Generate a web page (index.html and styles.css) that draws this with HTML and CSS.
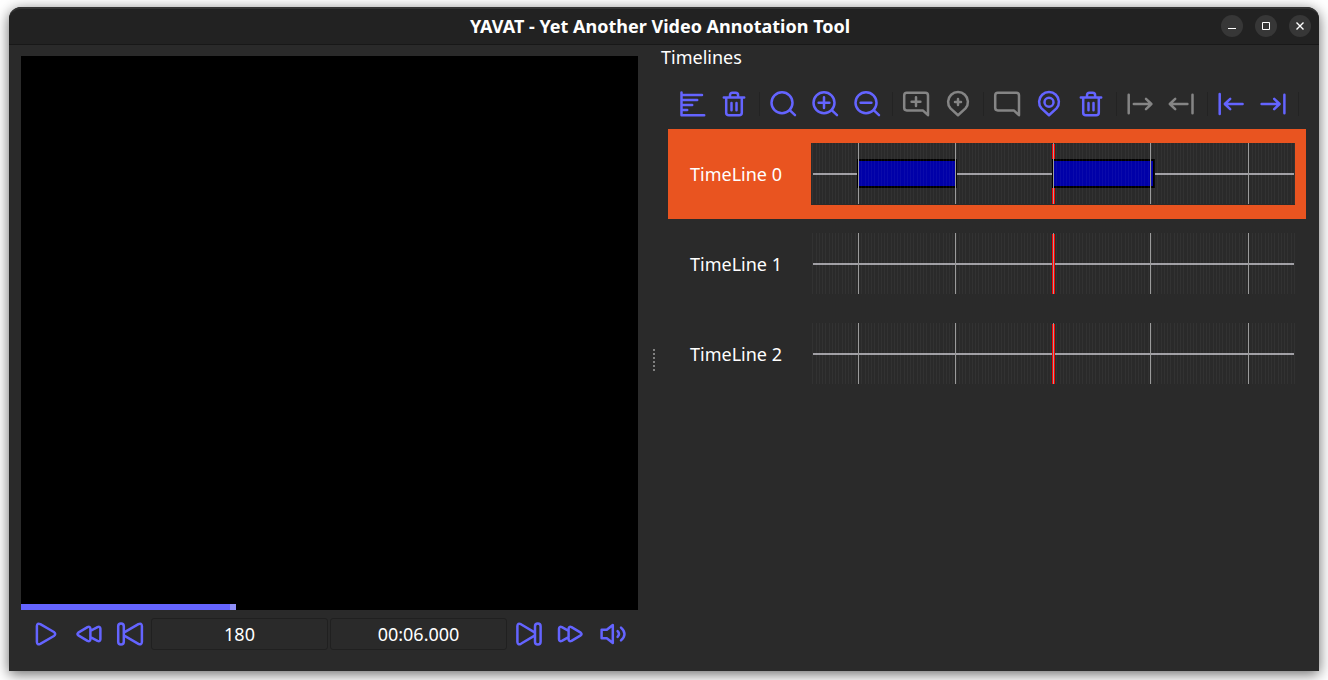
FILE: index.html
```html
<!DOCTYPE html>
<html lang="en">
<head>
<meta charset="utf-8">
<title>YAVAT - Yet Another Video Annotation Tool</title>
<link rel="stylesheet" href="styles.css">
</head>
<body>
<svg class="defs" aria-hidden="true">
  <symbol id="i-trash" viewBox="0 0 28 28"><path d="M3.8 7.5H24.2M10 7V5.2Q10 2.8 12.4 2.8H15.7Q18.1 2.8 18.1 5.2V7M6.2 8V22.7Q6.2 25.2 8.9 25.2H19.1Q21.8 25.2 21.8 22.7V8M11.5 12.9V20.3M16.5 12.9V20.3"/></symbol>
  <symbol id="i-comment" viewBox="0 0 28 28"><path d="M4.8 2.7H23.3Q26 2.7 26 5.4V25.2L20.8 20.4H4.8Q2.2 20.4 2.2 17.8V5.4Q2.2 2.7 4.8 2.7Z"/></symbol>
  <symbol id="i-pin" viewBox="0 0 28 28"><path d="M14 25.2L6.5 18.4A9.9 9.9 0 1 1 21.5 18.4Z"/></symbol>
  <symbol id="i-lens" viewBox="0 0 28 28"><circle cx="13" cy="12.7" r="10.5"/><path d="M20.7 20.2L26 25.2"/></symbol>
  <symbol id="grid" viewBox="0 0 484 62" preserveAspectRatio="none"><path class="minor" d="M1.46 30.5H484"/><path class="major" d="M47.5 0V61M144.5 0V61M242.5 0V61M339.5 0V61M437.5 0V61"/></symbol>
</svg>
<div class="window">
  <header class="titlebar">
    <h1>YAVAT - Yet Another Video Annotation Tool</h1>
    <div class="window-buttons">
      <button aria-label="Minimize"><svg viewBox="0 0 22 22"><path d="M7 13.5H15"/></svg></button>
      <button aria-label="Maximize"><svg viewBox="0 0 22 22"><path d="M7.5 7.5H14.5V14.5H7.5Z"/></svg></button>
      <button aria-label="Close"><svg viewBox="0 0 22 22"><path class="cross" d="M7.5 7.5L14.5 14.5M14.5 7.5L7.5 14.5"/></svg></button>
    </div>
  </header>
  <main class="content">
    <section class="player" aria-label="Player">
      <div class="video"></div>
      <input class="seek" type="range" min="0" max="1000" value="342" aria-label="Position">
      <div class="controls">
        <button class="tool" aria-label="Play"><svg viewBox="0 0 28 28"><path d="M5.9 6V22Q6.1 25.2 9.3 23.8L22.9 16Q25.5 14 22.9 12L9.3 4.2Q6.1 2.8 5.9 6Z"/></svg></button>
        <button class="tool" aria-label="Rewind"><svg viewBox="0 0 28 28"><path d="M5.3 12.6Q3.6 14 5.3 15.4L14.5 20.8Q17.2 22 17.4 19.2V8.8Q17.2 6 14.5 7.2ZM17.4 10.8L24.5 7.2Q27.2 6 27.4 8.8V19.2Q27.2 22 24.5 20.8L17.4 17.2"/></svg></button>
        <button class="tool" aria-label="Previous frame"><svg viewBox="0 0 28 28"><rect x="3.2" y="3.4" width="5.6" height="21.2" rx="2.8"/><path d="M9.2 12.4L23.4 4.2Q26.6 2.8 26.9 6V22Q26.6 25.2 23.4 23.8L9.2 15.6"/></svg></button>
        <input class="field" type="text" value="180" aria-label="Frame">
        <input class="field" type="text" value="00:06.000" aria-label="Time">
        <button class="tool" aria-label="Next frame"><svg viewBox="0 0 28 28"><rect x="20" y="3.4" width="5.6" height="21.2" rx="2.8"/><path d="M19.6 12.4L5.9 4.2Q2.7 2.8 2.4 6V22Q2.7 25.2 5.9 23.8L19.6 15.6"/></svg></button>
        <button class="tool" aria-label="Fast forward"><svg viewBox="0 0 28 28"><path d="M23.7 12.6Q25.4 14 23.7 15.4L14.5 20.8Q11.8 22 11.6 19.2V8.8Q11.8 6 14.5 7.2ZM11.6 10.8L4.9 7.2Q2.2 6 2 8.8V19.2Q2.2 22 4.9 20.8L11.6 17.2"/></svg></button>
        <button class="tool" aria-label="Volume"><svg viewBox="0 0 28 28"><path d="M2.6 9.8H7.8L13.8 5V23L7.8 18.2H2.6ZM18.6 11.2Q21.4 14 18.6 16.8M22 7.6Q29 14 22 20.4"/></svg></button>
      </div>
    </section>
    <div class="splitter"><i></i><i></i><i></i><i></i><i></i><i></i></div>
    <section class="timelines">
      <h2>Timelines</h2>
      <div class="toolbar" role="toolbar" aria-label="Timeline tools">
        <button class="tool" aria-label="Add timeline"><svg viewBox="0 0 28 28"><path d="M3.5 2.6V25.2H26.2M3.5 5H24M3.5 10H19.2M3.5 15H14.2M3.5 20H9.2"/></svg></button>
        <button class="tool" aria-label="Delete timeline"><svg><use href="#i-trash"/></svg></button>
        <span class="sep"></span>
        <button class="tool" aria-label="Reset zoom"><svg><use href="#i-lens"/></svg></button>
        <button class="tool" aria-label="Zoom in"><svg viewBox="0 0 28 28"><use href="#i-lens"/><path d="M7.6 12.7H18.4M13 7.3V18.1"/></svg></button>
        <button class="tool" aria-label="Zoom out"><svg viewBox="0 0 28 28"><use href="#i-lens"/><path d="M7.6 12.7H18.4"/></svg></button>
        <span class="sep"></span>
        <button class="tool" disabled aria-label="Add annotation"><svg viewBox="0 0 28 28"><use href="#i-comment"/><path d="M9.6 11.7H18.4M14 7.3V16.1"/></svg></button>
        <button class="tool" disabled aria-label="Add marker"><svg viewBox="0 0 28 28"><use href="#i-pin"/><path d="M11 12H17M14 9V15"/></svg></button>
        <span class="sep"></span>
        <button class="tool" disabled aria-label="Edit annotation"><svg><use href="#i-comment"/></svg></button>
        <button class="tool" aria-label="Edit marker"><svg viewBox="0 0 28 28"><use href="#i-pin"/><circle cx="14" cy="12.2" r="4.5"/></svg></button>
        <button class="tool" aria-label="Delete annotation"><svg><use href="#i-trash"/></svg></button>
        <span class="sep"></span>
        <button class="tool" disabled aria-label="Set start"><svg viewBox="0 0 28 28"><path d="M2.7 4.8V23.2M7.8 14H25.4M20 8.8L25.4 14L20 19.2"/></svg></button>
        <button class="tool" disabled aria-label="Set end"><svg viewBox="0 0 28 28"><path d="M24.5 4.8V23.2M19.4 14H1.8M7.2 8.8L1.8 14L7.2 19.2"/></svg></button>
        <span class="sep"></span>
        <button class="tool" aria-label="Go to start"><svg viewBox="0 0 28 28"><path d="M2.7 4V24M25.6 14H8M13.2 8.8L7.8 14L13.2 19.2"/></svg></button>
        <button class="tool" aria-label="Go to end"><svg viewBox="0 0 28 28"><path d="M25.4 4.8V23.2M2.6 14H20.4M15.2 8.8L20.6 14L15.2 19.2"/></svg></button>
        <span class="sep"></span>
      </div>
      <ul class="rows">
        <li class="row selected"><span class="name">TimeLine 0</span>
          <svg class="track" viewBox="0 0 484 62" preserveAspectRatio="none"><path class="axis" d="M2 31H483"/><path class="cursor" d="M242.5 1V61"/><path class="edge" d="M46 16H146V45H46ZM241 16H344V45H241Z"/><path class="segment" d="M48 18H144V43H48ZM243 18H342V43H243Z"/><use href="#grid" width="484" height="62"/></svg></li>
        <li class="row"><span class="name">TimeLine 1</span>
          <svg class="track" viewBox="0 0 484 62" preserveAspectRatio="none"><path class="axis" d="M2 31H483"/><path class="cursor" d="M242.5 1V61"/><use href="#grid" width="484" height="62"/></svg></li>
        <li class="row"><span class="name">TimeLine 2</span>
          <svg class="track" viewBox="0 0 484 62" preserveAspectRatio="none"><path class="axis" d="M2 31H483"/><path class="cursor" d="M242.5 1V61"/><use href="#grid" width="484" height="62"/></svg></li>
      </ul>
    </section>
  </main>
</div>
</body>
</html>
```
FILE: styles.css
```css
* { box-sizing: border-box; }
body {
  margin: 0;
  min-height: 100vh;
  padding: 7px 9px 9px;
  display: flex;
  background: #fff;
  color: #fff;
  font: 18px/24px "Noto Sans", "Open Sans", sans-serif;
}
button, input { font: inherit; color: inherit; margin: 0; padding: 0; border: 0; background: none; }
h1, h2 { margin: 0; font-size: 18px; }
.defs { position: absolute; width: 0; height: 0; }
.window {
  flex: 1;
  display: flex;
  flex-direction: column;
  background: #2a2a2a;
  border-radius: 12px 12px 0 0;
  box-shadow: 0 3px 14px rgba(0, 0, 0, .6);
}
.titlebar {
  display: grid;
  grid-template-columns: 1fr auto 1fr;
  align-items: center;
  height: 38px;
  padding: 0 8px 2px 0;
  background: #222;
  border-top: 2px solid #343434;
  border-bottom: 1px solid #181818;
  border-radius: 12px 12px 0 0;
}
.titlebar h1 { grid-column: 2; font-weight: 700; }
.window-buttons { display: flex; gap: 12px; justify-content: flex-end; }
.window-buttons button { width: 22px; height: 22px; border-radius: 50%; background: #373737; }
.window-buttons svg { display: block; width: 22px; height: 22px; fill: none; stroke: #fff; }
.window-buttons .cross { stroke-width: 1.4; }
.content { flex: 1; display: grid; grid-template-columns: 617fr 23px 658fr; padding-left: 12px; }
.player { display: flex; flex-direction: column; min-width: 0; padding: 11px 0 14px; }
.video { flex: 1; background: #000; }
.seek {
  appearance: none;
  display: block;
  width: 100%;
  height: 6px;
  background: linear-gradient(to right, #6464ff 34.4%, #000 34.4%);
}
.seek::-webkit-slider-thumb { appearance: none; width: 6px; height: 6px; background: #8f8ff8; }
.controls { display: flex; align-items: center; height: 46px; margin-top: 1px; padding: 0 4px 0 3px; }
.tool { flex: none; display: grid; place-items: center; width: 42px; height: 42px; }
.tool svg {
  width: 28px;
  height: 28px;
  overflow: visible;
  fill: none;
  stroke: #6464ff;
  stroke-width: 2.5;
  stroke-linecap: round;
  stroke-linejoin: round;
}
.tool:disabled svg { stroke: #858585; }
.field {
  flex: 1;
  min-width: 0;
  height: 32px;
  margin: 0 1px;
  border: 1px solid #202020;
  border-radius: 3px;
  text-align: center;
}
.splitter { display: flex; flex-direction: column; align-items: center; justify-content: center; gap: 2px; padding: 3px 0 0 9px; }
.splitter i { width: 2px; height: 2px; background: #808080; }
.timelines h2 { font-weight: 400; }
.toolbar { display: flex; align-items: center; height: 50px; margin-top: 10px; padding-left: 10px; }
.sep { width: 7px; height: 24px; padding-left: 4px; background: linear-gradient(#232323, #232323) content-box; border-right: 2px solid transparent; }
.rows { list-style: none; margin: 0 13px 0 7px; padding: 0; }
.row { display: flex; align-items: center; height: 90px; padding: 0 11px 0 22px; }
.row.selected { background: #e95420; }
.name { width: 121px; padding-bottom: 1px; }
.track { flex: 1; min-width: 0; height: 62px; background: #2a2a2a; fill: none; shape-rendering: crispEdges; }
.axis { stroke: #a09fa4; stroke-width: 2; }
.cursor { stroke: #f00; stroke-width: 3; }
.edge { fill: #000; }
.segment { fill: #0000a8; }
.minor { stroke: #fff; stroke-opacity: .04; stroke-width: 61; stroke-dasharray: 1 2.253; }
.major { stroke: #9b9b9b; stroke-width: 1; }
```
